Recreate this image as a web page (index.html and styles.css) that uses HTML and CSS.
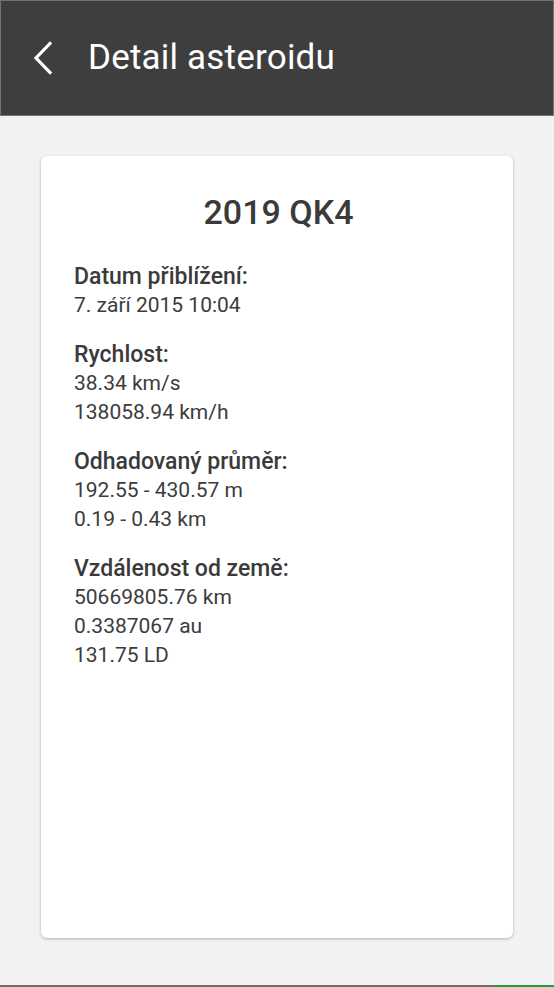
FILE: index.html
```html
<!DOCTYPE html>
<html lang="cs">
<head>
<meta charset="utf-8">
<title>Detail asteroidu</title>
<link rel="stylesheet" href="styles.css">
</head>
<body>
<div class="app">
  <header class="toolbar">
    <span class="back">
      <svg width="24" height="36" viewBox="0 0 24 36"><path d="M19 3.5 L5 18 L19 32.5" fill="none" stroke="#fff" stroke-width="3.2" stroke-linecap="square" stroke-linejoin="miter"/></svg>
    </span>
    <h1 class="toolbar-title">Detail asteroidu</h1>
  </header>
  <main class="content">
    <section class="card">
      <h2 class="card-title">2019 QK4</h2>
      <div class="group">
        <div class="label">Datum přiblížení:</div>
        <div class="value">7. září 2015 10:04</div>
      </div>
      <div class="group">
        <div class="label">Rychlost:</div>
        <div class="value">38.34 km/s</div>
        <div class="value">138058.94 km/h</div>
      </div>
      <div class="group">
        <div class="label">Odhadovaný průměr:</div>
        <div class="value">192.55 - 430.57 m</div>
        <div class="value">0.19 - 0.43 km</div>
      </div>
      <div class="group">
        <div class="label">Vzdálenost od země:</div>
        <div class="value">50669805.76 km</div>
        <div class="value">0.3387067 au</div>
        <div class="value">131.75 LD</div>
      </div>
    </section>
  </main>
  <footer class="bottom-line">
    <span class="line-gray"></span>
    <span class="line-green"></span>
  </footer>
</div>
</body>
</html>
```

FILE: styles.css
```css
html, body {
  margin: 0;
  padding: 0;
  background: #f2f2f2;
}
body {
  font-family: Roboto, "Noto Sans", "Liberation Sans", sans-serif;
  color: #3c3c3c;
}
.app {
  width: 554px;
  height: 987px;
  display: flex;
  flex-direction: column;
}
.toolbar {
  box-sizing: border-box;
  height: 116px;
  background: #3e3e3e;
  border: 1px solid #727272;
  display: flex;
  align-items: center;
  padding-left: 30px;
  flex: none;
}
.back {
  display: flex;
  width: 24px;
  height: 36px;
}
.toolbar-title {
  margin: 0 0 0 33px;
  font-size: 35px;
  font-weight: 400;
  color: #ffffff;
  letter-spacing: 0.2px;
  line-height: 40px;
}
.content {
  flex: 1;
  padding: 40px 41px 47px 41px;
  display: flex;
  flex-direction: column;
}
.card {
  flex: 1;
  background: #ffffff;
  border-radius: 6px;
  box-shadow: 0 1px 3px rgba(0, 0, 0, 0.28);
  padding: 36px 30px 0 33px;
}
.card-title {
  margin: 0 0 30px 0;
  text-align: center;
  font-size: 34px;
  font-weight: 500;
  line-height: 40px;
  color: #3a3a3a;
}
.group {
  margin-bottom: 20px;
}
.label {
  font-size: 23px;
  font-weight: 500;
  line-height: 29px;
  color: #3a3a3a;
}
.value {
  font-size: 21px;
  font-weight: 400;
  line-height: 29px;
  color: #3c3c3c;
}
.bottom-line {
  height: 2px;
  display: flex;
  flex: none;
}
.line-gray {
  flex: 1;
  background: #6e6e6e;
}
.line-green {
  width: 61px;
  background: #1f9d3b;
}
```
